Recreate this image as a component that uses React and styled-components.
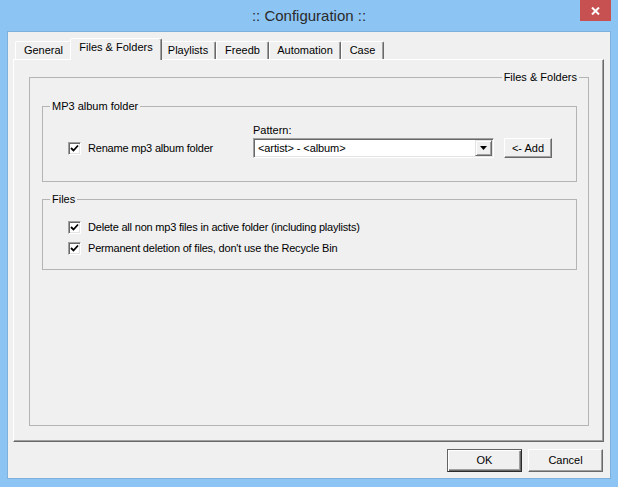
import React from 'react';
import styled, { createGlobalStyle } from 'styled-components';

const GlobalStyle = createGlobalStyle`
  html, body { margin: 0; padding: 0; background: #8cc4f4; }
  body {
    font-family: "Liberation Sans", Arial, sans-serif;
    font-size: 11px;
    color: #000;
    overflow: hidden;
  }
  * { box-sizing: border-box; }
`;

const Window = styled.div`
  width: 618px;
  height: 487px;
  background: #8cc4f4;
  display: flex;
  flex-direction: column;
  padding: 0 7px 8px 7px;
`;

const TitleBar = styled.div`
  height: 31px;
  flex: none;
  display: grid;
  grid-template-columns: 1fr auto 1fr;
  align-items: start;
`;

const Title = styled.div`
  grid-column: 2;
  line-height: 32px;
  font-size: 15px;
  color: #2a2a2a;
  white-space: nowrap;
`;

const CloseButton = styled.div`
  grid-column: 3;
  justify-self: end;
  width: 31px;
  height: 21px;
  background: #c75050;
  display: flex;
  align-items: center;
  justify-content: center;
`;

const Client = styled.div`
  flex: 1;
  background: #f0f0f0;
  border: 1px solid #7fb0dc;
  display: flex;
  flex-direction: column;
  padding: 6px 6px 6px 5px;
`;

const TabStrip = styled.div`
  height: 21px;
  flex: none;
  display: flex;
  align-items: flex-end;
  padding-left: 2px;
`;

const Tab = styled.div`
  position: relative;
  width: ${(p) => (p.$active ? p.$w + 4 : p.$w)}px;
  height: ${(p) => (p.$active ? 22 : 18)}px;
  margin: ${(p) => (p.$active ? '0 -2px -1px -2px' : '0')};
  z-index: ${(p) => (p.$active ? 2 : 1)};
  background: #f0f0f0;
  border-top: 1px solid #fff;
  border-left: 1px solid #fff;
  border-right: 1px solid #696969;
  box-shadow: inset -1px 0 0 #a0a0a0;
  border-radius: 2px 2px 0 0;
  display: flex;
  justify-content: center;
  align-items: ${(p) => (p.$active ? 'flex-start' : 'center')};
  padding-top: ${(p) => (p.$active ? 2 : 0)}px;
  line-height: 13px;
  white-space: nowrap;
`;

const Panel = styled.div`
  flex: 1;
  display: flex;
  flex-direction: column;
  border-top: 1px solid #fff;
  border-left: 1px solid #fff;
  border-right: 1px solid #696969;
  border-bottom: 1px solid #696969;
  box-shadow: inset -1px -1px 0 #a0a0a0;
  padding: 11px 14px 15px 15px;
`;

const Group = styled.fieldset`
  margin: 0;
  padding: 0;
  min-width: 0;
  border: 1px solid #b4b4b4;
  flex: ${(p) => (p.$fill ? 1 : 'none')};
`;

const Legend = styled.legend`
  padding: 0 2px;
  line-height: 13px;
  margin-left: ${(p) => (p.$right ? 'auto' : '7px')};
  margin-right: ${(p) => (p.$right ? '9px' : '0')};
`;

const GroupBody = styled.div`
  display: flex;
  flex-direction: column;
  gap: 11px;
  padding: 16px 11px 0 12px;
`;

const FolderRow = styled.div`
  display: flex;
  align-items: flex-end;
  padding: 11px 0 23px 25px;
`;

const CheckList = styled.div`
  display: flex;
  flex-direction: column;
  gap: 8px;
  padding: 15px 0 14px 25px;
`;

const CheckItem = styled.label`
  display: flex;
  align-items: center;
  gap: 7px;
  width: ${(p) => (p.$w ? `${p.$w}px` : 'auto')};
  height: ${(p) => (p.$h ? `${p.$h}px` : '13px')};
  line-height: 13px;
  letter-spacing: -0.2px;
  white-space: nowrap;
`;

const Box = styled.span`
  width: 13px;
  height: 13px;
  flex: none;
  background: #fff;
  border-top: 1px solid #a0a0a0;
  border-left: 1px solid #a0a0a0;
  border-right: 1px solid #fff;
  border-bottom: 1px solid #fff;
  box-shadow: inset 1px 1px 0 #696969, inset -1px -1px 0 #e3e3e3;
  display: flex;
  align-items: center;
  justify-content: center;
`;

const PatternField = styled.div`
  display: flex;
  flex-direction: column;
  gap: 1px;
`;

const FieldLabel = styled.span`
  line-height: 13px;
`;

const Combo = styled.div`
  width: 241px;
  height: 20px;
  background: #fff;
  border-top: 1px solid #a0a0a0;
  border-left: 1px solid #a0a0a0;
  border-right: 1px solid #fff;
  border-bottom: 1px solid #fff;
  box-shadow: inset 1px 1px 0 #696969, inset -1px -1px 0 #e3e3e3;
  display: flex;
  align-items: center;
  padding: 1px 1px 1px 4px;
`;

const ComboText = styled.span`
  flex: 1;
  line-height: 13px;
  letter-spacing: -0.1px;
`;

const DropButton = styled.span`
  width: 17px;
  height: 16px;
  background: #f0f0f0;
  border-top: 1px solid #e3e3e3;
  border-left: 1px solid #e3e3e3;
  border-right: 1px solid #696969;
  border-bottom: 1px solid #696969;
  box-shadow: inset 1px 1px 0 #fff, inset -1px -1px 0 #a0a0a0;
  display: flex;
  align-items: center;
  justify-content: center;
`;

const PushButton = styled.button`
  font-family: "Liberation Sans", Arial, sans-serif;
  font-size: 11px;
  color: #000;
  width: ${(p) => p.$w}px;
  height: ${(p) => p.$h}px;
  margin: 0;
  padding: 0;
  background: #f0f0f0;
  border-top: 1px solid ${(p) => (p.$default ? '#646464' : '#fff')};
  border-left: 1px solid ${(p) => (p.$default ? '#646464' : '#fff')};
  border-right: 1px solid ${(p) => (p.$default ? '#2b2b2b' : '#696969')};
  border-bottom: 1px solid ${(p) => (p.$default ? '#2b2b2b' : '#696969')};
  box-shadow: ${(p) =>
    p.$default
      ? 'inset 1px 1px 0 #fff, inset -1px -1px 0 #696969, inset -2px -2px 0 #a0a0a0'
      : 'inset -1px -1px 0 #a0a0a0'};
  line-height: 13px;
`;

const AddButton = styled(PushButton)`
  margin-left: 10px;
`;

const Footer = styled.div`
  flex: none;
  display: flex;
  justify-content: flex-end;
  gap: 6px;
  margin-top: 7px;
  padding-right: 1px;
`;

const Check = () => (
  <svg width="9" height="9" viewBox="0 0 9 9">
    <polyline points="1,4 3.5,6.5 8,1.5" fill="none" stroke="#000" strokeWidth="1.8" />
  </svg>
);

const tabs = [
  { label: 'General', w: 57 },
  { label: 'Files & Folders', w: 88, active: true },
  { label: 'Playlists', w: 56 },
  { label: 'Freedb', w: 53 },
  { label: 'Automation', w: 72 },
  { label: 'Case', w: 43 },
];

export default function App() {
  return (
    <>
      <GlobalStyle />
      <Window>
        <TitleBar>
          <Title>:: Configuration ::</Title>
          <CloseButton>
            <svg width="9" height="8" viewBox="0 0 9 8">
              <path d="M1 0.5 L8 7.5 M8 0.5 L1 7.5" stroke="#fff" strokeWidth="2" />
            </svg>
          </CloseButton>
        </TitleBar>
        <Client>
          <TabStrip>
            {tabs.map((t) => (
              <Tab key={t.label} $w={t.w} $active={t.active}>
                {t.label}
              </Tab>
            ))}
          </TabStrip>
          <Panel>
            <Group $fill>
              <Legend $right>Files &amp; Folders</Legend>
              <GroupBody>
                <Group>
                  <Legend>MP3 album folder</Legend>
                  <FolderRow>
                    <CheckItem $w={185} $h={20}>
                      <Box><Check /></Box>
                      Rename mp3 album folder
                    </CheckItem>
                    <PatternField>
                      <FieldLabel>Pattern:</FieldLabel>
                      <Combo>
                        <ComboText>&lt;artist&gt; - &lt;album&gt;</ComboText>
                        <DropButton>
                          <svg width="7" height="4" viewBox="0 0 7 4">
                            <path d="M0 0 H7 L3.5 4 Z" fill="#000" />
                          </svg>
                        </DropButton>
                      </Combo>
                    </PatternField>
                    <AddButton $w={48} $h={20}>&lt;- Add</AddButton>
                  </FolderRow>
                </Group>
                <Group>
                  <Legend>Files</Legend>
                  <CheckList>
                    <CheckItem>
                      <Box><Check /></Box>
                      Delete all non mp3 files in active folder (including playlists)
                    </CheckItem>
                    <CheckItem>
                      <Box><Check /></Box>
                      Permanent deletion of files, don't use the Recycle Bin
                    </CheckItem>
                  </CheckList>
                </Group>
              </GroupBody>
            </Group>
          </Panel>
          <Footer>
            <PushButton $w={75} $h={23} $default>OK</PushButton>
            <PushButton $w={75} $h={23}>Cancel</PushButton>
          </Footer>
        </Client>
      </Window>
    </>
  );
}
